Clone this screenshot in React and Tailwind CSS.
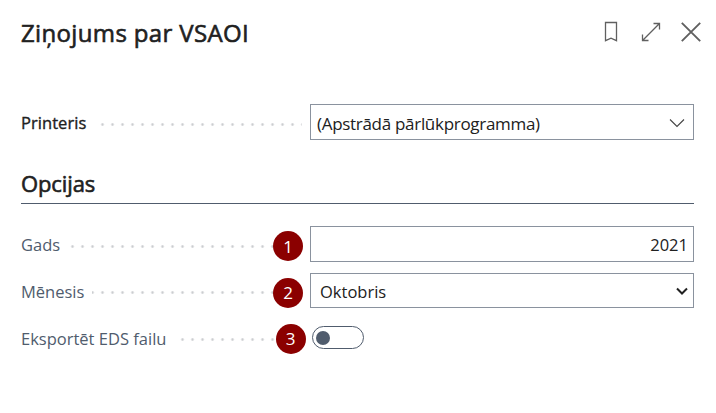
import React from "react";

function Row({ label, labelClass, className, badge, badgeClass, children }) {
  return (
    <div className={`flex items-center ${className}`}>
      <div className="relative flex h-full w-[281px] shrink-0 items-center">
        <span className={`block shrink-0 whitespace-nowrap pt-[2px] leading-[22px] ${labelClass}`}>{label}</span>
        <span className="mt-[4px] h-[3px] flex-1 bg-[radial-gradient(circle,#cbcdd0_0.9px,transparent_1.7px)] bg-[length:10px_3px] bg-[position:right_-5.5px_center] bg-repeat-x" />
        {badge && (
          <span
            className={`absolute flex h-[30px] w-[30px] items-center justify-center rounded-full bg-[#8b0000] font-['Open_Sans','Noto_Sans',sans-serif] text-[17px] leading-none text-white ${badgeClass}`}
          >
            {badge}
          </span>
        )}
      </div>
      <div className="ml-2 flex h-full flex-1 items-center">{children}</div>
    </div>
  );
}

export default function App() {
  return (
    <main className="h-[413px] w-[716px] overflow-hidden bg-white pl-[21px] pr-[22px] font-['Open_Sans','Noto_Sans',sans-serif] text-[#212121]">
      <header className="flex h-[64px] items-center">
        <h1 className="flex-1 whitespace-nowrap pt-px text-[24px] leading-[30px] tracking-[0.35px] [-webkit-text-stroke:0.6px]">Ziņojums par VSAOI</h1>
        <svg className="mr-[-8px] h-[64px] w-[116px]" viewBox="586 0 116 64" fill="none" stroke="#606060">
          <path d="M605.5 22.5h11v18.2l-5.5-2.6-5.5 2.6z" strokeWidth="1.3" />
          <path d="M642.8 40.2 659.2 23.8M653.5 23.5h6v6M648.5 40.5h-6v-6" strokeWidth="1.3" />
          <path d="M681.8 22.8 700.2 41.2M700.2 22.8 681.8 41.2" strokeWidth="1.9" />
        </svg>
      </header>

      <Row label="Printeris" labelClass="w-[77px] text-[16.5px] tracking-[0.05px] [-webkit-text-stroke:0.35px]" className="mt-10 h-9">
        <div className="flex h-full w-full items-center justify-between border border-[#8a929e] pl-[6px] pr-2">
          <span className="whitespace-nowrap pt-[3px] text-[17px] tracking-[-0.3px]">(Apstrādā pārlūkprogramma)</span>
          <svg className="mt-px h-4 w-4" viewBox="0 0 16 16" fill="none" stroke="#444">
            <path d="m1 4.5 7 7 7-7" strokeWidth="1.1" />
          </svg>
        </div>
      </Row>

      <section>
        <h2 className="mt-[29px] flex h-[35px] items-center border-b border-[#505c6d] pb-[5px] text-[22px] tracking-[-0.1px] [-webkit-text-stroke:0.6px]">
          Opcijas
        </h2>
        <Row label="Gads" labelClass="w-[45px] text-[16.5px] text-[#505c6d]" className="mt-[22px] h-9" badge="1" badgeClass="left-[252px] top-[5px]">
          <div className="flex h-full w-full items-center justify-end border border-[#8a929e] pr-[5px] pt-[2px] text-[16.5px]">2021</div>
        </Row>
        <Row label="Mēnesis" labelClass="w-[71px] text-[16.5px] text-[#505c6d]" className="mt-[11px] h-[35px]" badge="2" badgeClass="left-[252px] top-[4.5px]">
          <div className="flex h-full w-full items-center justify-between border border-[#8a929e] pl-[9px] pr-[5px] text-[16.5px]">
            <span className="pt-[3px]">Oktobris</span>
            <svg className="h-3 w-3" viewBox="0 0 12 12" fill="none" stroke="#212121">
              <path d="m1 3.5 5 5 5-5" strokeWidth="2" />
            </svg>
          </div>
        </Row>
        <Row label="Eksportēt EDS failu" labelClass="w-[155px] text-[16.5px] text-[#505c6d]" className="mt-[12px] h-[35px]" badge="3" badgeClass="left-[254.5px] top-[3.5px]">
          <div className="ml-[2px] flex h-[23px] w-[52px] items-center rounded-full border border-[#505c6d] pl-[3px]">
            <span className="h-[14px] w-[14px] rounded-full bg-[#505c6d]" />
          </div>
        </Row>
      </section>
    </main>
  );
}
